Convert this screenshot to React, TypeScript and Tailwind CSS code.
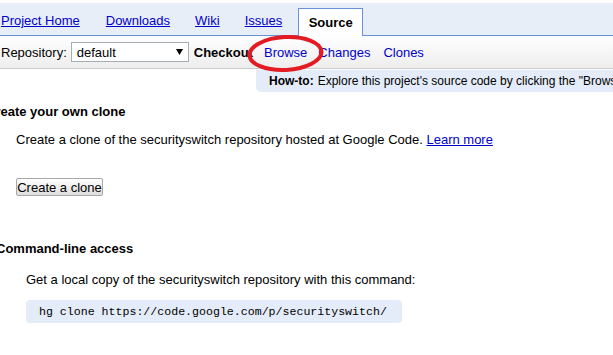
import React from "react";

const tabs = [
  { label: "Project Home", ml: "ml-0" },
  { label: "Downloads", ml: "ml-[26px]" },
  { label: "Wiki", ml: "ml-[25px]" },
  { label: "Issues", ml: "ml-[25px]" },
];

function TabBar() {
  return (
    <div className="mt-[3px] flex h-[33px] items-end border-b border-[#6b90da] bg-[#e8eef7] pl-px">
      {tabs.map((t) => (
        <a
          key={t.label}
          href="#"
          className={`${t.ml} mb-[7px] whitespace-nowrap leading-[15px] text-[#0000cc] underline`}
        >
          {t.label}
        </a>
      ))}
      <div className="-mb-px ml-[16px] flex h-[28px] w-[65px] justify-center border border-b-0 border-[#6b90da] bg-white pt-[6px] font-bold leading-[15px]">
        Source
      </div>
    </div>
  );
}

function SubBar() {
  return (
    <div className="flex h-[33px] items-center whitespace-nowrap border-b border-[#cccccc] bg-gradient-to-b from-white to-[#ededed] pl-px leading-[15px]">
      <span>Repository:</span>
      <div className="ml-[4px] flex h-[20px] w-[118px] items-center justify-between border border-[#a5acb2] bg-white pl-[5px] pr-[5px]">
        <span>default</span>
        <svg width="7" height="6" viewBox="0 0 7 6">
          <path d="M0 0h7L3.5 6z" fill="#000" />
        </svg>
      </div>
      <span className="ml-[5px] font-bold">Checkout</span>
      <a href="#" className="ml-[11px] text-[#0000cc]">Browse</a>
      <a href="#" className="ml-[11px] text-[#0000cc]">Changes</a>
      <a href="#" className="ml-[13px] text-[#0000cc]">Clones</a>
    </div>
  );
}

export default function App() {
  return (
    <div className="relative h-[355px] w-[613px] overflow-hidden bg-white font-['Liberation_Sans',Arial,sans-serif] text-[13px] text-black">
      <TabBar />
      <SubBar />

      <div className="ml-[256px] mt-px flex h-[22px] w-[420px] items-center overflow-hidden whitespace-nowrap rounded-bl-[5px] bg-[#e5ecf9] pl-[13px] text-[12px]">
        <b>How-to:</b>
        <span className="ml-[4px]">
          Explore this project's source code by clicking the "Browse" link above.
        </span>
      </div>

      <h2 className="-ml-[14px] mt-[12px] whitespace-nowrap font-bold leading-[15px]">
        Create your own clone
      </h2>
      <p className="ml-[16px] mt-[13px] whitespace-nowrap leading-[15px]">
        Create a clone of the securityswitch repository hosted at Google Code.{" "}
        <a href="#" className="text-[#0000cc] underline">
          Learn more
        </a>
      </p>
      <button className="ml-[16px] mt-[31px] flex h-[18px] w-[87px] items-center justify-center rounded-[2px] border border-[#a8a8a8] bg-gradient-to-b from-white to-[#dedede] leading-[15px]">
        Create a clone
      </button>

      <h2 className="-ml-[4px] mt-[45px] whitespace-nowrap font-bold leading-[15px]">
        Command-line access
      </h2>
      <p className="ml-[26px] mt-[16px] whitespace-nowrap leading-[15px]">
        Get a local copy of the securityswitch repository with this command:
      </p>
      <div className="ml-[26px] mt-[13px] flex h-[23px] w-[376px] items-center rounded-[4px] bg-[#e5ecf9] pl-[13px] font-['Liberation_Mono',monospace] text-[11.6px]">
        hg clone https://code.google.com/p/securityswitch/
      </div>

      {/* hand-drawn highlight round the Browse link */}
      <svg
        className="absolute left-[245px] top-[32px]"
        width="82"
        height="44"
        viewBox="0 0 82 44"
      >
        <ellipse
          cx="40.5"
          cy="21.5"
          rx="36"
          ry="16.5"
          fill="none"
          stroke="#e31b23"
          strokeWidth="4"
          transform="rotate(-3 40.5 21.5)"
        />
      </svg>
    </div>
  );
}
